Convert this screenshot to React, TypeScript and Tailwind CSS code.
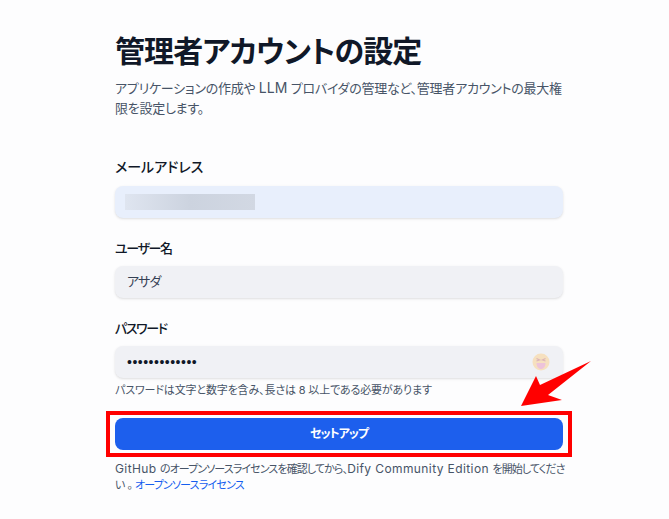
export default function App() {
  const font = { fontFamily: 'Inter, "Noto Sans CJK JP", sans-serif' };
  const kana = "text-[11px] tracking-[-0.9px]";
  return (
    <div style={font} className="relative w-[669px] h-[519px] overflow-hidden bg-[#fdfdfe] text-[#101828] [font-feature-settings:'palt']">
      <div className="w-[448px] ml-[115px] pt-[31px] flex flex-col">
        <h1 className="text-[30px] leading-[40px] font-bold tracking-[-0.9px] text-[#101828]">管理者アカウントの設定</h1>
        <p className="mt-[7px] text-[13px] leading-[20px] tracking-[-0.25px] whitespace-nowrap text-[#475467]">アプリケーションの作成や <span className="text-[14px] tracking-normal">LLM</span> プロバイダの管理など、管理者アカウントの最大権<br />限を設定します。</p>
        <label className="mt-[39px] text-[14px] leading-[20px] font-medium text-[#101828]">メールアドレス</label>
        <div className="mt-[9px] h-[32px] rounded-lg bg-[#e8effc] shadow-sm flex items-center pl-[10px]">
          <div className="w-[130px] h-[16px] bg-gradient-to-r from-[#dfe5f0] via-[#ccd3df] to-[#d2d8e3]" />
        </div>
        <label className="mt-[20px] text-[13px] leading-[20px] tracking-[-1.4px] font-medium">ユーザー名</label>
        <div className="mt-[8px] h-[32px] rounded-lg bg-[#f0f1f5] shadow-sm flex items-center px-3 text-[13px] tracking-[-1px] text-[#344054]">アサダ</div>
        <label className="mt-[20px] text-[13px] leading-[20px] tracking-[-1.4px] font-medium">パスワード</label>
        <div className="mt-[8px] h-[32px] rounded-lg bg-[#f0f1f5] shadow-sm flex items-center justify-between px-3 text-[14px]">
          <span className="font-['Liberation_Sans'] text-[#101828] tracking-[0.5px]">•••••••••••••</span>
          <svg width="18" height="18" viewBox="0 0 18 18" className="-ml-[2px] mr-[1px]">
            <circle cx="9" cy="9" r="8.500" fill="#f6e0bf" />
            <path d="M4.500 5.500l3 1.500-3 1M13.500 5.500l-3 1.500 3 1" stroke="#dcb4b8" strokeWidth="1.200" fill="none" />
            <path d="M4.500 10h9c0 3.500-2 6-4.500 6s-4.500-2.500-4.500-6z" fill="#edc3da" />
          </svg>
        </div>
        <p className="mt-[4px] text-[11px] leading-[16px] tracking-[-0.15px] text-[#475467]">パスワードは文字と数字を含み、長さは 8 以上である必要があります</p>
        <div className="relative mt-[20px]">
          <div className="absolute -left-[9px] -right-[9px] -top-[7px] -bottom-[7px] border-[4px] border-[#ff0000]" />
          <button className="w-full h-[32px] rounded-lg bg-[#1d5fed] text-white text-[12px] tracking-[-1px] font-semibold">セットアップ</button>
        </div>
        <p className="mt-[11px] text-[12px] leading-[15px] whitespace-nowrap text-[#475467]">
          <span className="tracking-[0.4px]">GitHub</span> <span className={kana}>のオープンソースライセンスを確認してから、</span><span className="tracking-[0.4px]">Dify Community Edition</span> <span className={kana}>を開始してくださ</span><br /><span className="text-[11px] tracking-[2px]">い。</span><span className="text-[11px] tracking-[-0.8px] text-[#155eef]">オープンソースライセンス</span>
        </p>
      </div>
      <svg className="absolute left-[515px] top-[355px]" width="80" height="55" viewBox="0 0 80 55">
        <path d="M6 51L21 21 25 30 76 6 33 40 47 45z" fill="#ff0000" />
      </svg>
    </div>
  );
}
